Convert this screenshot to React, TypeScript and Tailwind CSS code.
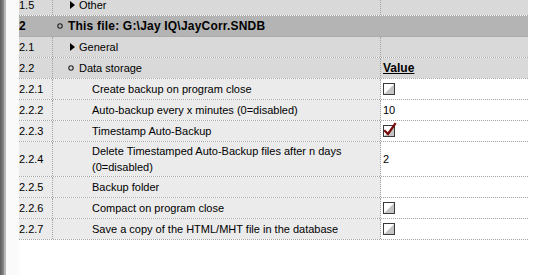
import React from "react";

const Tri = () => (
  <svg width="5" height="8" viewBox="0 0 5 8" className="shrink-0">
    <path d="M0 0 L5 4 L0 8 Z" fill="#000" />
  </svg>
);

const Ring = () => (
  <svg width="6" height="6" viewBox="0 0 6 6" className="shrink-0">
    <circle cx="3" cy="3" r="2.2" fill="none" stroke="#222" strokeWidth="1.1" />
  </svg>
);

const Box = ({ checked }: { checked?: boolean }) => (
  <svg width="14" height="14" viewBox="0 0 14 14" className="shrink-0 overflow-visible">
    <defs>
      <linearGradient id="cbg" x1="0" y1="0" x2="1" y2="1">
        <stop offset="0.48" stopColor="#ffffff" />
        <stop offset="0.52" stopColor="#c4c4c4" />
      </linearGradient>
    </defs>
    <rect x="0.5" y="1.5" width="11" height="11" fill="url(#cbg)" stroke="#3a3a3a" strokeWidth="1" />
    <line x1="2" y1="11" x2="10" y2="3" stroke="#ffffff" strokeWidth="0.8" strokeDasharray="1 1" />
    {checked && (
      <path d="M2 7 L5 10 L12 0" fill="none" stroke="#7a0a0a" strokeWidth="2.2" strokeLinecap="square" />
    )}
  </svg>
);

type Cell = React.ReactNode;

const Row = ({
  num,
  label,
  value,
  kind,
  h = "h-[21px]",
}: {
  num: Cell;
  label: Cell;
  value?: Cell;
  kind: "group" | "data";
  h?: string;
}) => {
  const labelBg = kind === "group" ? "bg-[#d9d9d9]" : "bg-[#ebebeb]";
  const valueBg = kind === "group" ? "bg-[#d9d9d9]" : "bg-white";
  return (
    <div className={`grid grid-cols-[34px_328px_147px] ${h} border-b border-dotted border-[#a3a3a3]`}>
      <div className={`flex items-center border-r border-dotted border-[#a3a3a3] ${labelBg}`}>{num}</div>
      <div className={`flex items-center border-r border-dotted border-[#a3a3a3] ${labelBg}`}>{label}</div>
      <div className={`flex items-center pl-[2px] ${valueBg}`}>{value}</div>
    </div>
  );
};

export default function App() {
  return (
    <div className="flex h-[275px] w-[554px] overflow-hidden bg-white text-[11px] leading-[12px] text-black font-['Liberation_Sans',Arial,sans-serif]">
      <div className="w-[4px] shrink-0 bg-gradient-to-r from-[#5e5e5e] to-[#8a8a8a]" />
      <div className="w-[2px] shrink-0 bg-[#b8b8b8]" />
      <div className="w-[13px] shrink-0 bg-[#fafafa]" />
      <div className="-mt-[5px] w-[509px] shrink-0">
        <Row
          kind="group"
          num="1.5"
          label={
            <div className="flex items-center pl-[17px] gap-[4px]">
              <Tri />
              <span>Other</span>
            </div>
          }
        />
        <div className="flex h-[21px] items-center border-b border-dotted border-[#a3a3a3] bg-[#b4b4b4] text-[12px] font-bold tracking-[0.2px]">
          <span className="w-[38px]">2</span>
          <Ring />
          <span className="pl-[5px]">This file: G:\Jay IQ\JayCorr.SNDB</span>
        </div>
        <Row
          kind="group"
          num="2.1"
          label={
            <div className="flex items-center pl-[17px] gap-[4px]">
              <Tri />
              <span>General</span>
            </div>
          }
        />
        <Row
          kind="group"
          num="2.2"
          label={
            <div className="flex items-center pl-[15px] gap-[5px]">
              <Ring />
              <span>Data storage</span>
            </div>
          }
          value={<span className="text-[12px] font-bold underline">Value</span>}
        />
        <Row kind="data" num="2.2.1" label={<span className="pl-[39px]">Create backup on program close</span>} value={<Box />} />
        <Row kind="data" num="2.2.2" label={<span className="pl-[39px]">Auto-backup every x minutes (0=disabled)</span>} value={<span>10</span>} />
        <Row kind="data" num="2.2.3" label={<span className="pl-[39px]">Timestamp Auto-Backup</span>} value={<Box checked />} />
        <Row
          kind="data"
          h="h-[35px]"
          num="2.2.4"
          label={
            <span className="pl-[39px] leading-[16px]">
              Delete Timestamped Auto-Backup files after n days
              <br />
              (0=disabled)
            </span>
          }
          value={<span>2</span>}
        />
        <Row kind="data" num="2.2.5" label={<span className="pl-[39px]">Backup folder</span>} value={null} />
        <Row kind="data" num="2.2.6" label={<span className="pl-[39px]">Compact on program close</span>} value={<Box />} />
        <Row kind="data" num="2.2.7" label={<span className="pl-[39px]">Save a copy of the HTML/MHT file in the database</span>} value={<Box />} />
      </div>
    </div>
  );
}
